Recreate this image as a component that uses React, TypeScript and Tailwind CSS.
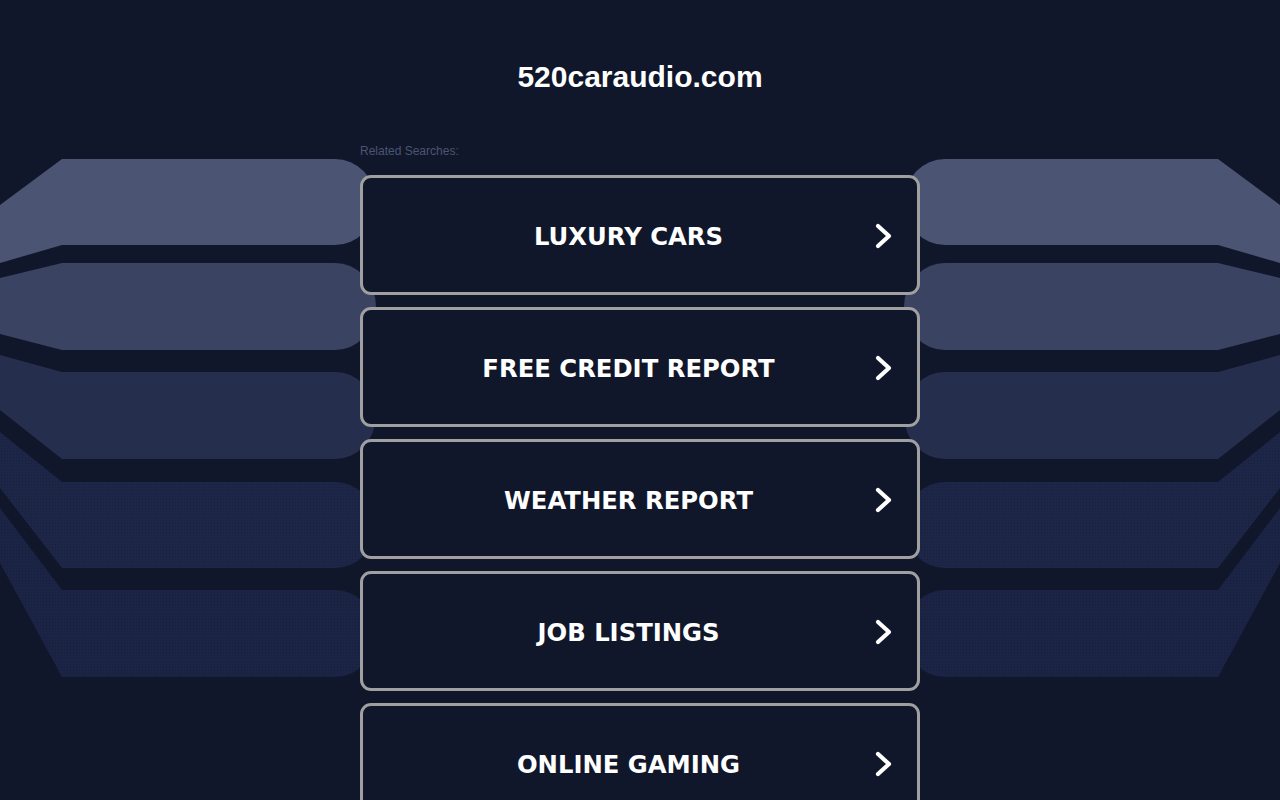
import React from "react";

const bands = [
  { c: "#4b5573", y0: 205, t: 159, b: 245, y1: 263, dots: false },
  { c: "#3a4362", y0: 278, t: 263, b: 350, y1: 334, dots: false },
  { c: "#262e4d", y0: 355, t: 372, b: 459, y1: 410, dots: false },
  { c: "#1d2647", y0: 432, t: 482, b: 568, y1: 488, dots: true },
  { c: "#1b2445", y0: 508, t: 590, b: 677, y1: 563, dots: true },
];

function bandPath(bd: (typeof bands)[number]) {
  const ry = (bd.b - bd.t) / 2;
  return `M0 ${bd.y0} L62 ${bd.t} L335 ${bd.t} A41 ${ry} 0 0 1 335 ${bd.b} L62 ${bd.b} L0 ${bd.y1} Z`;
}

function Backdrop() {
  return (
    <svg
      className="absolute left-0 top-0 pointer-events-none"
      width="1280"
      height="800"
      viewBox="0 0 1280 800"
    >
      <defs>
        <pattern id="dots" width="3" height="3" patternUnits="userSpaceOnUse">
          <rect x="1" y="1" width="1" height="1" fill="#131a35" opacity="0.55" />
        </pattern>
      </defs>
      {[0, 1].map((side) => (
        <g key={side} transform={side === 1 ? "translate(1280,0) scale(-1,1)" : undefined}>
          {bands.map((bd, i) => (
            <g key={i}>
              <path d={bandPath(bd)} fill={bd.c} />
              {bd.dots && <path d={bandPath(bd)} fill="url(#dots)" />}
            </g>
          ))}
        </g>
      ))}
    </svg>
  );
}

function Chevron() {
  return (
    <svg width="17" height="26" viewBox="0 0 17 26" className="shrink-0 mt-[1px]">
      <path
        d="M3 3 L14 13 L3 23"
        fill="none"
        stroke="#ffffff"
        strokeWidth="4.2"
        strokeLinecap="round"
        strokeLinejoin="round"
      />
    </svg>
  );
}

const items = ["LUXURY CARS", "FREE CREDIT REPORT", "WEATHER REPORT", "JOB LISTINGS", "ONLINE GAMING"];

export default function App() {
  return (
    <div className="relative w-full h-[800px] overflow-hidden bg-[#10172b]">
      <Backdrop />
      <div className="relative w-[560px] mx-auto flex flex-col">
        <h1
          className="pt-[59px] text-center text-white font-bold text-[30px] leading-[36px]"
          style={{ fontFamily: '"Liberation Sans", Arial, sans-serif' }}
        >
          520caraudio.com
        </h1>
        <div
          className="mt-[49px] text-[12px] leading-[14px] text-[#4b5573]"
          style={{ fontFamily: '"Liberation Sans", Arial, sans-serif' }}
        >
          Related Searches:
        </div>
        <div className="mt-[17px] flex flex-col gap-[12px]">
          {items.map((t) => (
            <div
              key={t}
              className="h-[120px] shrink-0 flex items-center rounded-[11px] border-[3px] border-[#a0a0a0] bg-[#10172b] pl-[19px] pr-[25px]"
            >
              <span
                className="flex-1 text-center text-white font-bold text-[24.3px] leading-[30px] pt-[4px]"
                style={{ fontFamily: '"DejaVu Sans", Verdana, sans-serif' }}
              >
                {t}
              </span>
              <Chevron />
            </div>
          ))}
        </div>
      </div>
    </div>
  );
}
